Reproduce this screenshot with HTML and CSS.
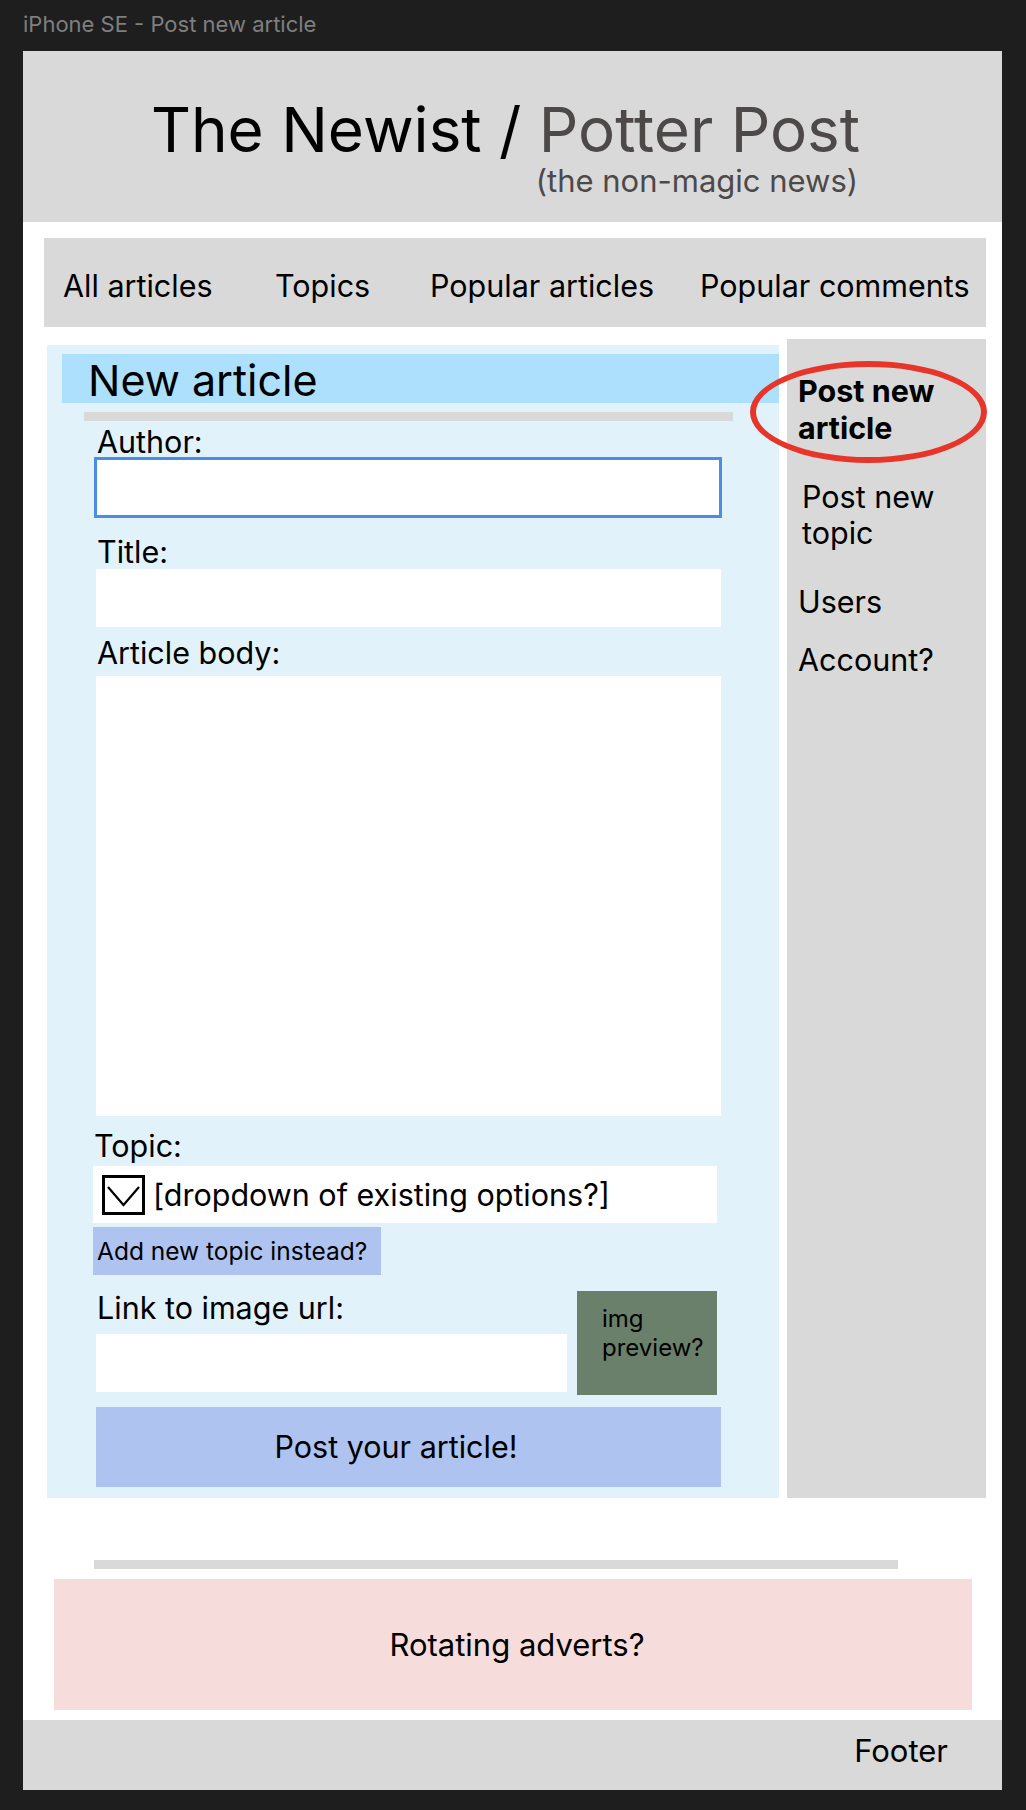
FILE: index.html
```html
<!DOCTYPE html>
<html lang="en">
<head>
<meta charset="utf-8">
<title>iPhone SE - Post new article</title>
<link rel="stylesheet" href="styles.css">
</head>
<body>
<div class="frame-label">iPhone SE - Post new article</div>
<div class="frame">
  <header class="site-header">
    <div class="brand">
      <h1 class="brand-title">The Newist / <span class="brand-alt">Potter Post</span></h1>
      <div class="brand-sub">(the non-magic news)</div>
    </div>
  </header>

  <nav class="topnav">
    <a class="nav-item">All articles</a>
    <a class="nav-item">Topics</a>
    <a class="nav-item">Popular articles</a>
    <a class="nav-item">Popular comments</a>
  </nav>

  <div class="main">
    <section class="form-box">
      <h2 class="form-head">New article</h2>
      <div class="divider"></div>
      <div class="fields">
        <label class="label label-first">Author:</label>
        <div class="input input-author"></div>

        <label class="label label-title">Title:</label>
        <div class="input input-title"></div>

        <label class="label label-body">Article body:</label>
        <div class="input textarea"></div>

        <label class="label label-topic">Topic:</label>
        <div class="dropdown">
          <svg class="dd-icon" width="43" height="40" viewBox="0 0 43 40">
            <rect x="1.5" y="1.5" width="40" height="37" fill="none" stroke="#000" stroke-width="3"/>
            <path d="M6 12 L21.5 30 L37 12" fill="none" stroke="#000" stroke-width="2.2"/>
          </svg>
          <span class="dd-text">[dropdown of existing options?]</span>
        </div>
        <div class="add-topic">Add new topic instead?</div>

        <div class="link-row">
          <div class="link-col">
            <label class="label label-link">Link to image url:</label>
            <div class="input input-url"></div>
          </div>
          <div class="preview">img<br>preview?</div>
        </div>

        <div class="post-btn">Post your article!</div>
      </div>
    </section>

    <aside class="sidebar">
      <div class="ring"></div>
      <a class="side-item side-active">Post new<br>article</a>
      <a class="side-item side-topic">Post new<br>topic</a>
      <a class="side-item side-users">Users</a>
      <a class="side-item side-account">Account?</a>
    </aside>
  </div>

  <div class="divider-bottom"></div>
  <div class="ad">Rotating adverts?</div>
  <footer class="footer">Footer</footer>
</div>
</body>
</html>
```

FILE: styles.css
```css
* { box-sizing: border-box; }

body {
  margin: 0;
  width: 1026px;
  min-height: 1810px;
  background: #1e1e1e;
  font-family: Inter, "Noto Sans", sans-serif;
  color: #000;
}

.frame-label {
  height: 51px;
  padding: 11px 0 0 23px;
  font-size: 22px;
  line-height: 26px;
  color: #7f7f7f;
}

.frame {
  margin-left: 23px;
  width: 979px;
  height: 1739px;
  background: #fff;
  overflow: hidden;
}

/* header */
.site-header {
  height: 171px;
  background: #d9d9d9;
  display: flex;
  justify-content: center;
  padding: 48px 14px 0 0;
}
.brand {
  display: flex;
  flex-direction: column;
  align-items: flex-end;
}
.brand-title {
  margin: 0;
  font-weight: 400;
  font-size: 62px;
  line-height: 62px;
  color: #000;
  white-space: nowrap;
}
.brand-alt { color: #4d4949; }
.brand-sub {
  margin-top: 5px;
  margin-right: 2px;
  font-size: 31px;
  line-height: 30px;
  color: #4d4949;
}

/* nav */
.topnav {
  margin: 16px 16px 0 21px;
  height: 89px;
  background: #d9d9d9;
  display: grid;
  grid-template-columns: 212px 155px 270px auto;
  padding: 6px 0 0 19px;
  font-size: 30.5px;
  line-height: 83px;
}
.nav-item { color: #000; white-space: nowrap; }

/* main */
.main {
  display: flex;
  gap: 8px;
  margin: 12px 16px 0 24px;
}
.form-box {
  flex: 1;
  margin-top: 6px;
  background: #e1f2fb;
  padding: 9px 0 11px 0;
}
.form-head {
  margin: 0 0 0 15px;
  height: 49px;
  padding: 3px 0 0 26px;
  background: #ade0fc;
  font-size: 43px;
  font-weight: 400;
  line-height: 46px;
}
.divider {
  margin: 9px 46px 0 37px;
  height: 9px;
  background: #d9d9d9;
}
.fields {
  margin-left: 49px;
  width: 625px;
}
.label {
  display: block;
  font-size: 30.5px;
  line-height: 30px;
  padding-left: 1px;
}
.label-first { margin-top: 6px; }
.label-title { margin-top: 19px; }
.label-body { margin-top: 11px; }
.label-topic { margin-top: 15px; padding-left: 0; margin-left: -2px; }
.input { background: #fff; }
.input-author {
  height: 61px;
  margin-left: -2px;
  width: 628px;
  border: 3px solid #4a8ee4;
}
.input-title { margin-top: 2px; height: 58px; }
.textarea { margin-top: 8px; height: 440px; }

.dropdown {
  margin: 5px 0 0 -3px;
  width: 624px;
  height: 57px;
  background: #fff;
  display: flex;
  align-items: center;
  gap: 8px;
  padding-left: 9px;
}
.dd-icon { flex: none; }
.dd-text { font-size: 30.5px; line-height: 30px; white-space: nowrap; }

.add-topic {
  margin: 4px 0 0 -3px;
  width: 288px;
  height: 48px;
  background: #afc3f0;
  font-size: 24.5px;
  line-height: 48px;
  padding-left: 4px;
  white-space: nowrap;
}

.link-row {
  display: flex;
  gap: 10px;
  margin-top: 16px;
}
.link-col { width: 471px; }
.label-link { padding-top: 2px; line-height: 30px; }
.input-url { margin-top: 11px; height: 58px; }
.preview {
  width: 140px;
  height: 104px;
  background: #6b806b;
  padding: 13px 0 0 25px;
  font-size: 24px;
  line-height: 29px;
}

.post-btn {
  margin-top: 12px;
  height: 80px;
  background: #afc3f0;
  text-align: center;
  padding-right: 25px;
  font-size: 30.5px;
  line-height: 80px;
}

/* sidebar */
.sidebar {
  position: relative;
  width: 199px;
  background: #d9d9d9;
  padding: 33px 0 0 11px;
  display: flex;
  flex-direction: column;
  align-items: flex-start;
}
.side-item {
  font-size: 30.5px;
  line-height: 36px;
  color: #000;
}
.side-active { font-weight: 700; line-height: 37px; position: relative; }
.side-topic { margin-top: 33px; padding-left: 4px; }
.side-users { margin-top: 33px; }
.side-account { margin-top: 22px; }
.ring {
  position: absolute;
  left: -37px;
  top: 22px;
  width: 237px;
  height: 102px;
  border: 6px solid #e8352a;
  border-radius: 50%;
}

/* bottom */
.divider-bottom {
  margin: 62px 0 0 71px;
  width: 804px;
  height: 9px;
  background: #d9d9d9;
}
.ad {
  margin: 10px 30px 0 31px;
  height: 131px;
  background: #f7dcdc;
  text-align: center;
  padding-left: 8px;
  font-size: 31px;
  line-height: 131px;
}
.footer {
  margin-top: 10px;
  height: 70px;
  background: #d9d9d9;
  text-align: right;
  padding-right: 54px;
  font-size: 31px;
  line-height: 62px;
}
```
